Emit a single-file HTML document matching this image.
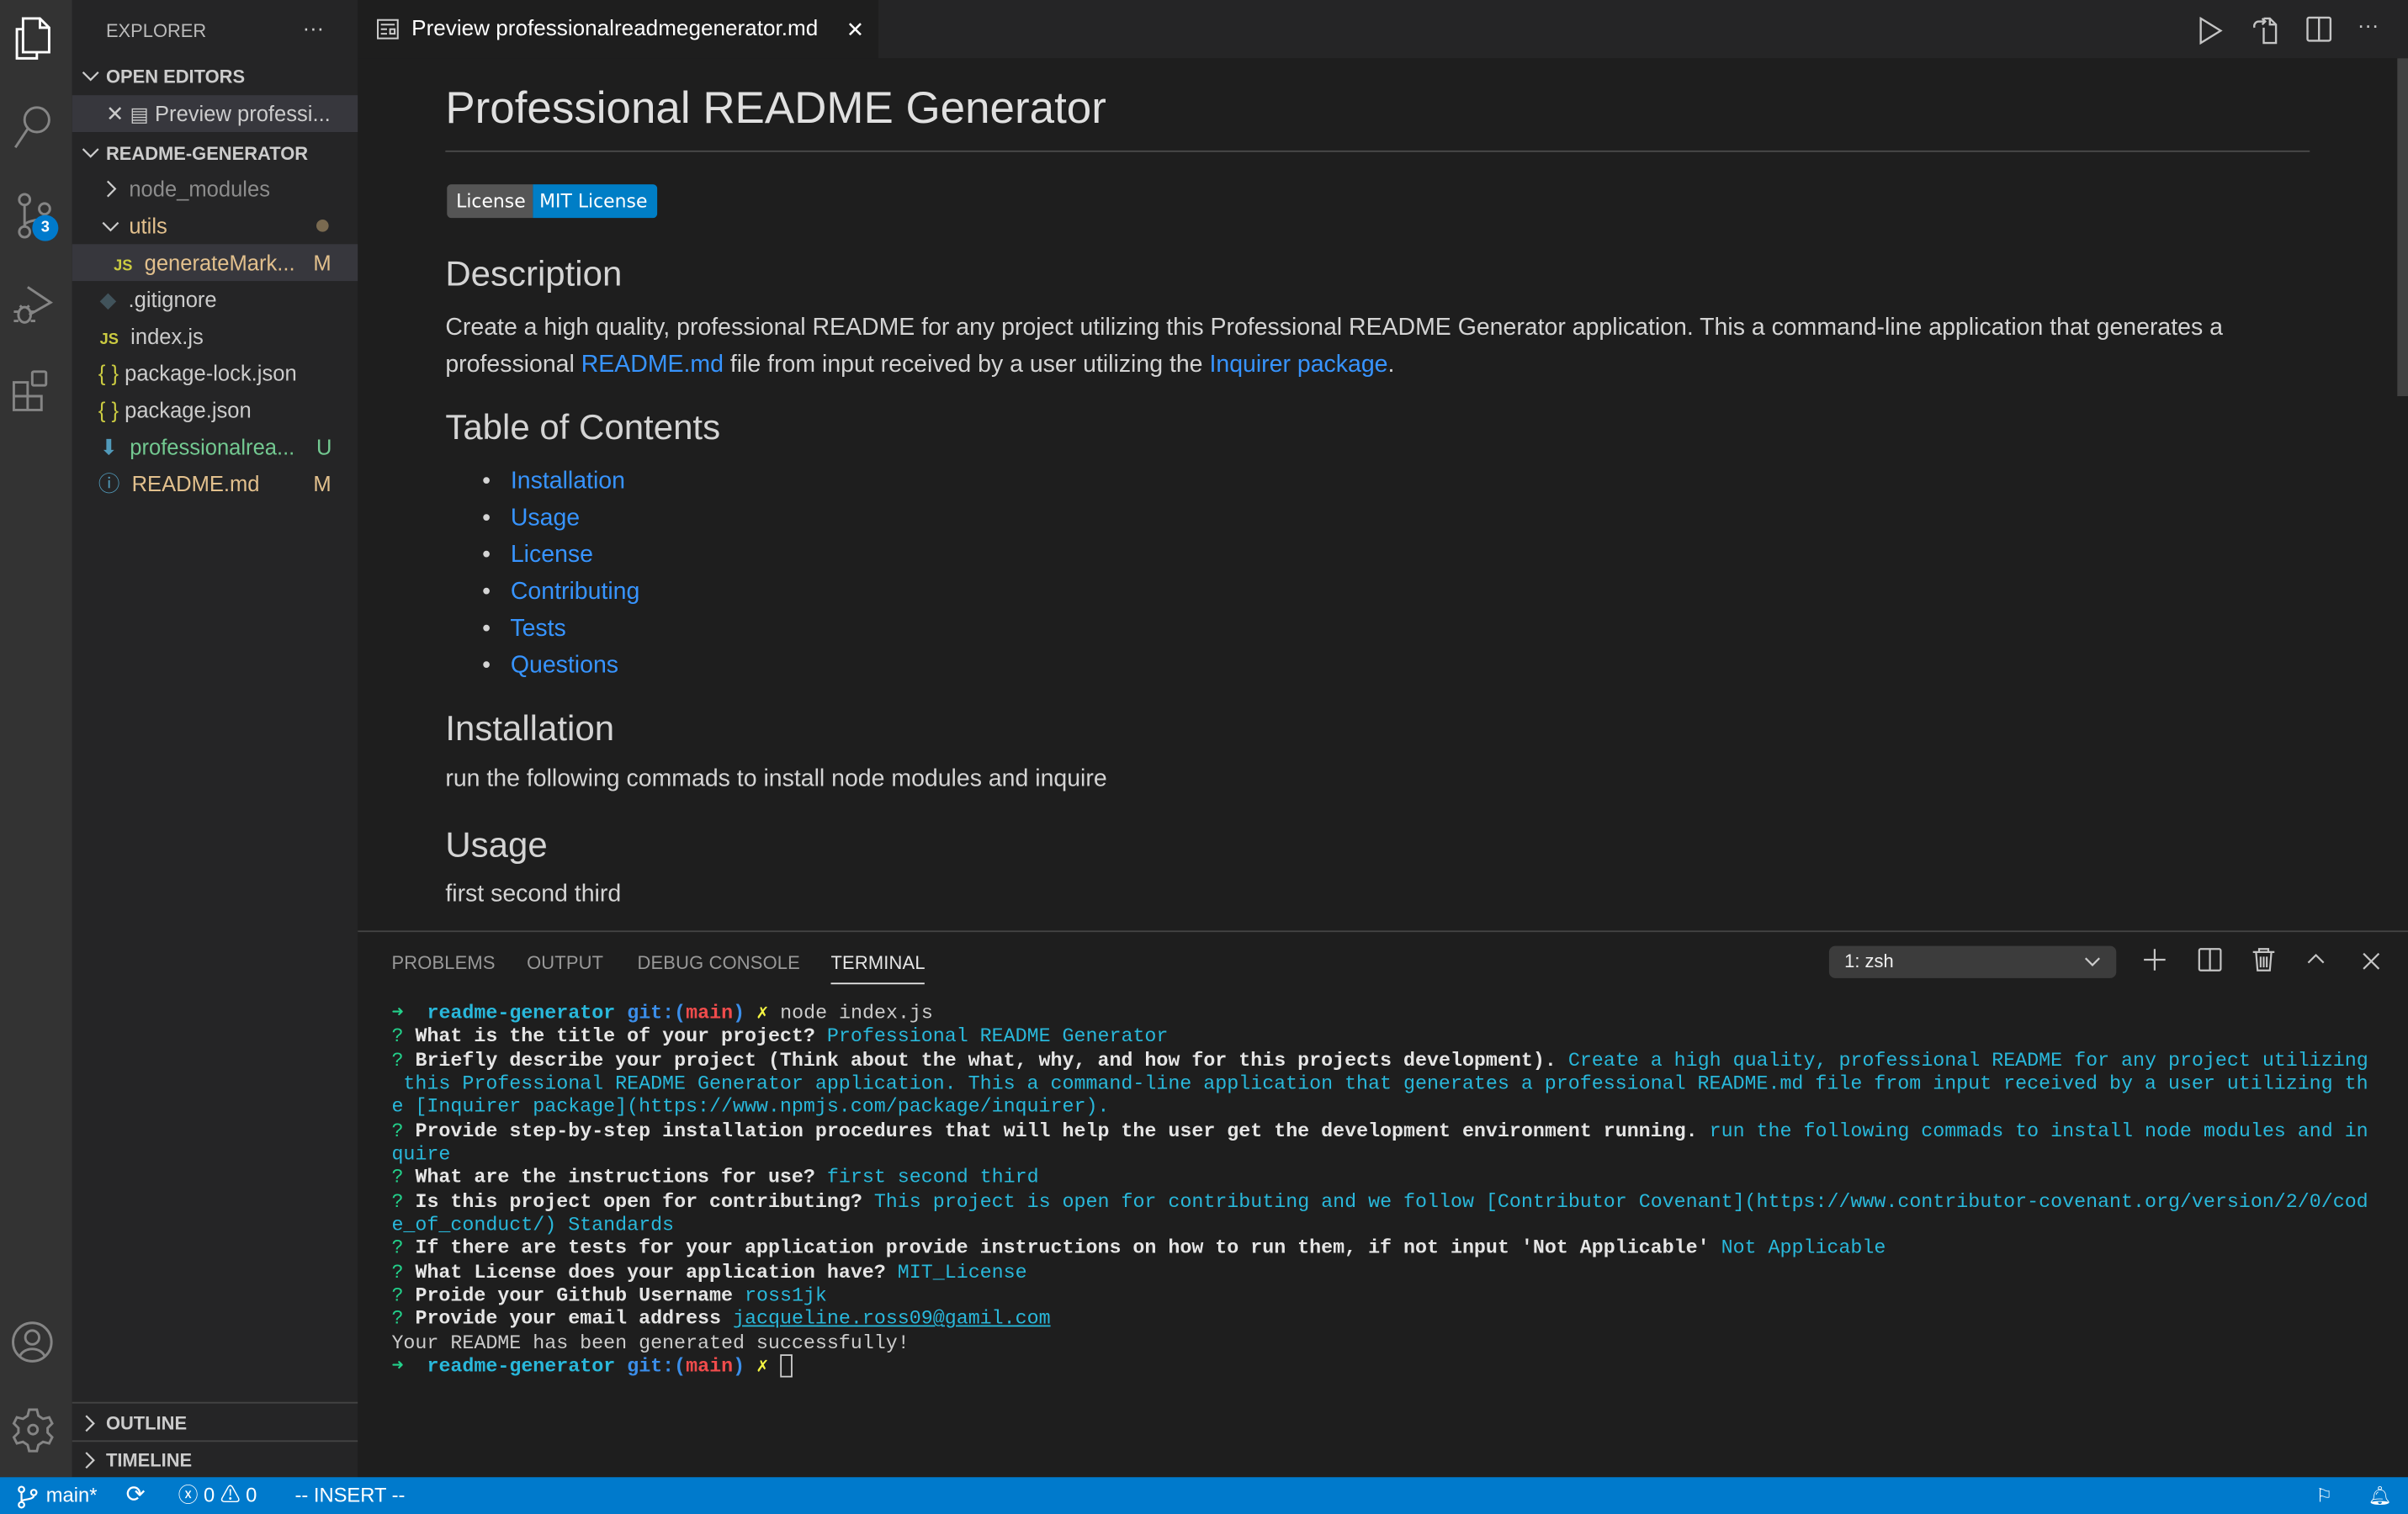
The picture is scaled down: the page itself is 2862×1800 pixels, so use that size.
<!DOCTYPE html>
<html><head><meta charset="utf-8"><style>
*{margin:0;padding:0;box-sizing:border-box}
html,body{width:2862px;height:1800px;overflow:hidden;background:#1e1e1e}
#r{position:absolute;left:0;top:0;width:1568px;height:986px;transform:scale(1.8253,1.8256);transform-origin:0 0;font-family:"Liberation Sans",sans-serif;color:#ccc}
.a{position:absolute}
#act{left:0;top:0;width:47px;height:962px;background:#333}
#side{left:47px;top:0;width:186px;height:962px;background:#252526;font-size:14px}
.row{position:absolute;left:0;width:186px;height:24px;line-height:24px;white-space:nowrap}
.hd{font-size:12px;font-weight:bold;color:#ccc}
#tabs{left:233px;top:0;width:1335px;height:38px;background:#252526}
#tab{left:233px;top:0;width:339px;height:38px;background:#1e1e1e;color:#fff;font-size:14.3px;line-height:38px}
#ed{left:233px;top:38px;width:1335px;height:568px;background:#1e1e1e}
.md{position:absolute;left:290px;color:#d4d4d4;white-space:nowrap}
.h2{font-size:23px}
.p{font-size:15.6px}
.lk{color:#3794ff}
#panel{left:233px;top:606px;width:1335px;height:356px;background:#1e1e1e;border-top:1px solid #444}
.pt{position:absolute;top:13px;font-size:12px;color:#999;letter-spacing:.1px}
#term{position:absolute;left:22px;top:45px;font-family:"Liberation Mono",monospace;font-size:12.78px;line-height:15.33px;white-space:pre;color:#ccc}
b{color:#e5e5e5}
.g{color:#23d18b}.c{color:#29b8db}.r{color:#f14c4c}.y{color:#f5f543}.bl{color:#3b8eea}
#st{left:0;top:962px;width:1568px;height:24px;background:#007acc;color:#fff;font-size:13px;line-height:24px}
svg{position:absolute}
</style></head><body><div id="r">
<div id="act" class="a">
<svg style="left:8px;top:10px" width="28" height="30" viewBox="0 0 28 30" fill="none" stroke="#fff" stroke-width="1.6"><path d="M7 9H3v19h13v-4"/><path d="M7 2h11l6 6v16H7z"/><path d="M18 2v6h6"/></svg>
<svg style="left:8px;top:66px" width="28" height="32" viewBox="0 0 28 32" fill="none" stroke="#858585" stroke-width="1.6"><circle cx="16" cy="12" r="8"/><path d="M10 18L2 30"/></svg>
<svg style="left:8px;top:124px" width="30" height="34" viewBox="0 0 30 34" fill="none" stroke="#858585" stroke-width="1.6"><circle cx="8" cy="6" r="3.5"/><circle cx="21" cy="12" r="3.5"/><circle cx="8" cy="27" r="3.5"/><path d="M8 10v13M21 16c0 4-13 3-13 7"/></svg>
<div class="a" style="left:21px;top:140px;width:17px;height:17px;border-radius:50%;background:#007acc;color:#fff;font-size:10px;font-weight:bold;text-align:center;line-height:17px">3</div>
<svg style="left:7px;top:183px" width="30" height="30" viewBox="0 0 30 30" fill="none" stroke="#858585" stroke-width="1.6"><path d="M11 4l15 10-14 8"/><ellipse cx="9" cy="22" rx="4" ry="5"/><path d="M2 20h3M13 20h3M2 26h3M13 26h3M6 16l2 2M12 16l-2 2"/></svg>
<svg style="left:7px;top:240px" width="30" height="30" viewBox="0 0 30 30" fill="none" stroke="#858585" stroke-width="1.6"><path d="M2 9h9v9h9v9H2zM2 18h9v9M11 18v9"/><rect x="14" y="2" width="9" height="9" rx="1"/></svg>
<svg style="left:7px;top:860px" width="30" height="30" viewBox="0 0 30 30" fill="none" stroke="#858585" stroke-width="1.6"><circle cx="14" cy="14" r="12.5"/><circle cx="14" cy="11" r="4.5"/><path d="M6 23c3-6 13-6 16 0"/></svg>
<svg style="left:7px;top:916px" width="30" height="30" viewBox="0 0 30 30" fill="none" stroke="#858585" stroke-width="1.6"><path d="M12 2h5l1 4 3 2 4-1 2 4-3 3v3l3 3-2 4-4-1-3 2-1 4h-5l-1-4-3-2-4 1-2-4 3-3v-3l-3-3 2-4 4 1 3-2z"/><circle cx="14.5" cy="15" r="3"/></svg>
</div>
<div id="side" class="a">
<div class="row" style="top:8px;left:22px;font-size:12px;color:#bbb">EXPLORER</div>
<div class="row" style="top:6px;left:150px;color:#ccc;font-size:14px">···</div>
<svg style="left:6px;top:46px" width="12" height="8" viewBox="0 0 12 8" fill="none" stroke="#ccc" stroke-width="1.2"><path d="M1 1l5 5 5-5"/></svg>
<div class="row hd" style="top:38px;left:22px">OPEN EDITORS</div>
<div class="row" style="top:62px;background:#37373d;color:#ccc;padding-left:22px">✕ <span style="font-size:13px">▤</span> Preview professi...</div>
<svg style="left:6px;top:96px" width="12" height="8" viewBox="0 0 12 8" fill="none" stroke="#ccc" stroke-width="1.2"><path d="M1 1l5 5 5-5"/></svg>
<div class="row hd" style="top:88px;left:22px">README-GENERATOR</div>
<svg style="left:22px;top:117px" width="8" height="12" viewBox="0 0 8 12" fill="none" stroke="#ccc" stroke-width="1.2"><path d="M1 1l5 5-5 5"/></svg>
<div class="row" style="top:111px;padding-left:37px;color:#8c8c8c">node_modules</div>
<svg style="left:19px;top:144px" width="12" height="8" viewBox="0 0 12 8" fill="none" stroke="#ccc" stroke-width="1.2"><path d="M1 1l5 5 5-5"/></svg>
<div class="row" style="top:135px;padding-left:37px;color:#e2c08d">utils<span style="position:absolute;left:159px;top:8px;width:8px;height:8px;border-radius:50%;background:#7a6a50"></span></div>
<div class="row" style="top:159px;background:#37373d;padding-left:27px;color:#e2c08d"><span style="color:#cbcb41;font-size:10px;font-weight:bold">JS</span>&nbsp; generateMark...<span style="position:absolute;left:157px">M</span></div>
<div class="row" style="top:183px;padding-left:18px;color:#ccc"><span style="color:#41535b">◆</span>&nbsp; .gitignore</div>
<div class="row" style="top:207px;padding-left:18px;color:#ccc"><span style="color:#cbcb41;font-size:10px;font-weight:bold">JS</span>&nbsp; index.js</div>
<div class="row" style="top:231px;padding-left:17px;color:#ccc"><span style="color:#cbcb41">{ }</span> package-lock.json</div>
<div class="row" style="top:255px;padding-left:17px;color:#ccc"><span style="color:#cbcb41">{ }</span> package.json</div>
<div class="row" style="top:279px;padding-left:18px;color:#73c991"><span style="color:#519aba">⬇</span>&nbsp; professionalrea...<span style="position:absolute;left:159px">U</span></div>
<div class="row" style="top:303px;padding-left:17px;color:#e2c08d"><span style="color:#519aba">ⓘ</span>&nbsp; README.md<span style="position:absolute;left:157px">M</span></div>
<div class="a" style="left:0;top:913px;width:186px;height:1px;background:#444"></div>
<svg style="left:8px;top:921px" width="8" height="12" viewBox="0 0 8 12" fill="none" stroke="#ccc" stroke-width="1.2"><path d="M1 1l5 5-5 5"/></svg>
<div class="row hd" style="top:915px;left:22px">OUTLINE</div>
<div class="a" style="left:0;top:938px;width:186px;height:1px;background:#444"></div>
<svg style="left:8px;top:945px" width="8" height="12" viewBox="0 0 8 12" fill="none" stroke="#ccc" stroke-width="1.2"><path d="M1 1l5 5-5 5"/></svg>
<div class="row hd" style="top:939px;left:22px">TIMELINE</div>
</div>
<div id="tabs" class="a">
<svg style="left:1198px;top:11px" width="18" height="18" viewBox="0 0 18 18" fill="none" stroke="#c5c5c5" stroke-width="1.3"><path d="M2 1l13 8-13 8z"/></svg>
<svg style="left:1233px;top:10px" width="18" height="20" viewBox="0 0 18 20" fill="none" stroke="#c5c5c5" stroke-width="1.3"><path d="M8 2h4l4 4v12H8V8M12 2v4h4M2 8a3 3 0 013-4h4M7 2l2 2-2 2"/></svg>
<svg style="left:1268px;top:10px" width="18" height="18" viewBox="0 0 18 18" fill="none" stroke="#c5c5c5" stroke-width="1.3"><rect x="1.5" y="1.5" width="15" height="15" rx="1"/><path d="M9 1.5v15"/></svg>
<div class="a" style="left:1302px;top:8px;font-size:14px;color:#c5c5c5">···</div>
</div>
<div id="tab" class="a"><svg style="left:12px;top:12px" width="15" height="14" viewBox="0 0 15 14" fill="none" stroke="#ccc" stroke-width="1.1"><rect x="1" y="1" width="13" height="12"/><path d="M3 4h9M3 7h4M3 10h4M9 7h3v3H9z"/></svg><span style="position:absolute;left:35px">Preview professionalreadmegenerator.md</span><span style="position:absolute;left:318px;font-size:14px">✕</span></div>
<div id="ed" class="a"><div class="a" style="left:1328px;top:0;width:7px;height:220px;background:#424242"></div></div>
<div class="md" style="top:55px;font-size:29px;color:#e0e0e0">Professional README Generator</div>
<div class="a" style="left:290px;top:98px;width:1214px;height:1px;background:#4a4a4a"></div>
<div class="a" style="left:291px;top:120px;height:22px;font-family:'DejaVu Sans',sans-serif;font-size:12px;line-height:22px;border-radius:3px;overflow:hidden;white-space:nowrap"><span style="background:#555;color:#fff;padding:0 5px 0 6px;display:inline-block">License</span><span style="background:#007ec6;color:#fff;padding:0 6px 0 4px;display:inline-block">MIT License</span></div>
<div class="md h2" style="top:165px">Description</div>
<div class="md p" style="top:202px;line-height:24px">Create a high quality, professional README for any project utilizing this Professional README Generator application. This a command-line application that generates a<br>professional <span class="lk">README.md</span> file from input received by a user utilizing the <span class="lk">Inquirer package</span>.</div>
<div class="md h2" style="top:265px">Table of Contents</div>
<div class="md p" style="top:302px;left:314px;line-height:24px"><span style="color:#d4d4d4">•</span>&nbsp;&nbsp; <span class="lk">Installation</span><br>•&nbsp;&nbsp; <span class="lk">Usage</span><br>•&nbsp;&nbsp; <span class="lk">License</span><br>•&nbsp;&nbsp; <span class="lk">Contributing</span><br>•&nbsp;&nbsp; <span class="lk">Tests</span><br>•&nbsp;&nbsp; <span class="lk">Questions</span></div>
<div class="md h2" style="top:461px">Installation</div>
<div class="md p" style="top:499px">run the following commads to install node modules and inquire</div>
<div class="md h2" style="top:537px">Usage</div>
<div class="md p" style="top:574px">first second third</div>
<div id="panel" class="a">
<span class="pt" style="left:22px">PROBLEMS</span><span class="pt" style="left:110px">OUTPUT</span><span class="pt" style="left:182px">DEBUG CONSOLE</span><span class="pt" style="left:308px;color:#e7e7e7">TERMINAL</span>
<div class="a" style="left:308px;top:33px;width:61px;height:1px;background:#e7e7e7"></div>
<div class="a" style="left:958px;top:9px;width:187px;height:21px;background:#3c3c3c;border-radius:4px;font-size:12px;color:#f0f0f0;line-height:21px;padding-left:10px">1: zsh<svg style="right:10px;top:7px" width="11" height="7" viewBox="0 0 11 7" fill="none" stroke="#ccc" stroke-width="1.2"><path d="M1 1l4.5 4.5L10 1"/></svg></div>
<svg style="left:1162px;top:10px" width="16" height="16" viewBox="0 0 16 16" stroke="#c5c5c5" stroke-width="1.2"><path d="M8 1v14M1 8h14"/></svg>
<svg style="left:1198px;top:10px" width="16" height="16" viewBox="0 0 16 16" fill="none" stroke="#c5c5c5" stroke-width="1.2"><rect x="1" y="1" width="14" height="14" rx="1"/><path d="M8 1v14"/></svg>
<svg style="left:1233px;top:9px" width="16" height="18" viewBox="0 0 16 18" fill="none" stroke="#c5c5c5" stroke-width="1.2"><path d="M1 4h14M5 4V2h6v2M3 4l1 12h8l1-12M6 7v7M8 7v7M10 7v7"/></svg>
<svg style="left:1268px;top:12px" width="14" height="10" viewBox="0 0 14 10" fill="none" stroke="#c5c5c5" stroke-width="1.2"><path d="M2 8l5-5 5 5"/></svg>
<svg style="left:1304px;top:12px" width="14" height="14" viewBox="0 0 14 14" stroke="#c5c5c5" stroke-width="1.2"><path d="M2 2l10 10M12 2L2 12"/></svg>
<div id="term"><b class="g">➜</b>  <b class="c">readme-generator</b> <b class="bl">git:(</b><b class="r">main</b><b class="bl">)</b> <b class="y">✗</b> node index.js
<span class="g">?</span> <b>What is the title of your project?</b> <span class="c">Professional README Generator</span>
<span class="g">?</span> <b>Briefly describe your project (Think about the what, why, and how for this projects development).</b> <span class="c">Create a high quality, professional README for any project utilizing</span>
<span class="c"> this Professional README Generator application. This a command-line application that generates a professional README.md file from input received by a user utilizing th</span>
<span class="c">e [Inquirer package](https://www.npmjs.com/package/inquirer).</span>
<span class="g">?</span> <b>Provide step-by-step installation procedures that will help the user get the development environment running.</b> <span class="c">run the following commads to install node modules and in</span>
<span class="c">quire</span>
<span class="g">?</span> <b>What are the instructions for use?</b> <span class="c">first second third</span>
<span class="g">?</span> <b>Is this project open for contributing?</b> <span class="c">This project is open for contributing and we follow [Contributor Covenant](https://www.contributor-covenant.org/version/2/0/cod</span>
<span class="c">e_of_conduct/) Standards</span>
<span class="g">?</span> <b>If there are tests for your application provide instructions on how to run them, if not input 'Not Applicable'</b> <span class="c">Not Applicable</span>
<span class="g">?</span> <b>What License does your application have?</b> <span class="c">MIT_License</span>
<span class="g">?</span> <b>Proide your Github Username</b> <span class="c">ross1jk</span>
<span class="g">?</span> <b>Provide your email address</b> <span class="c" style="text-decoration:underline">jacqueline.ross09@gamil.com</span>
Your README has been generated successfully!
<b class="g">➜</b>  <b class="c">readme-generator</b> <b class="bl">git:(</b><b class="r">main</b><b class="bl">)</b> <b class="y">✗</b> <span style="outline:1px solid #ccc;outline-offset:-1px"> </span></div>
</div>
<div id="st" class="a">
<svg style="left:11px;top:5px" width="14" height="16" viewBox="0 0 14 16" fill="none" stroke="#fff" stroke-width="1.2"><circle cx="3" cy="3" r="1.8"/><circle cx="3" cy="13" r="1.8"/><circle cx="11" cy="5" r="1.8"/><path d="M3 5v6M11 7c0 3-8 2-8 4"/></svg>
<span class="a" style="left:30px">main*</span>
<span class="a" style="left:82px;font-size:15px">⟳</span>
<span class="a" style="left:116px">ⓧ 0 ⚠ 0</span>
<span class="a" style="left:192px">-- INSERT --</span>
<span class="a" style="left:1508px;font-size:12px">⚐</span>
<span class="a" style="left:1542px;font-size:12px">🔔︎</span>
</div>
</div></body></html>
